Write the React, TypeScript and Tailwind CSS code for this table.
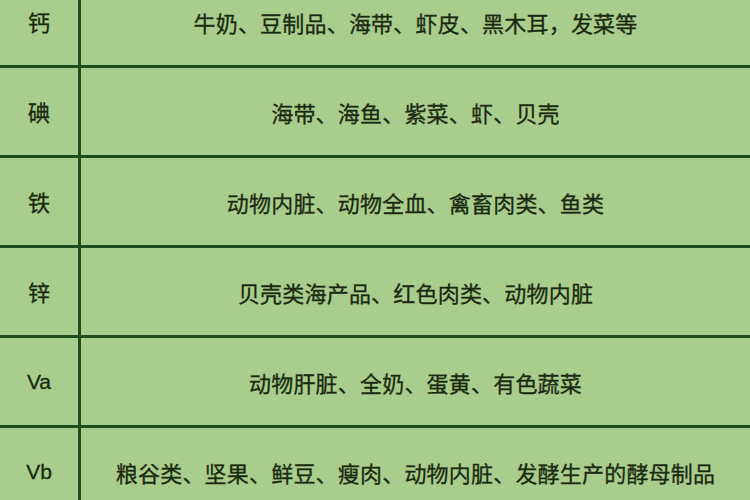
const rows = [
  { name: "钙", foods: "牛奶、豆制品、海带、虾皮、黑木耳，发菜等" },
  { name: "碘", foods: "海带、海鱼、紫菜、虾、贝壳" },
  { name: "铁", foods: "动物内脏、动物全血、禽畜肉类、鱼类" },
  { name: "锌", foods: "贝壳类海产品、红色肉类、动物内脏" },
  { name: "Va", foods: "动物肝脏、全奶、蛋黄、有色蔬菜" },
  { name: "Vb", foods: "粮谷类、坚果、鲜豆、瘦肉、动物内脏、发酵生产的酵母制品" },
];

const App = () => {
  return (
    <div
      className="h-[500px] w-[750px] overflow-hidden bg-[#a9cd8d] text-[#1a2a10]"
      style={{ fontFamily: '"Noto Sans CJK SC", "Noto Sans", sans-serif' }}
    >
      <div className="-mt-[22px] flex flex-col">
        {rows.map((row) => (
          <div
            key={row.name}
            className="flex h-[90px] shrink-0 border-b-[3px] border-[#1f4c1b]"
          >
            <div className="flex w-[81px] shrink-0 items-center justify-center border-r-[3px] border-[#1f4c1b]">
              {/^[A-Za-z]/.test(row.name) ? (
                <span className="font-['Liberation_Sans',sans-serif] text-[21px] [-webkit-text-stroke:0.3px_#1a2a10]">
                  {row.name}
                </span>
              ) : (
                <span className="text-[22px] [-webkit-text-stroke:0.3px_#1a2a10]">{row.name}</span>
              )}
            </div>
            <div className="flex flex-1 items-center justify-center text-[22px] leading-none tracking-[0.2px] [-webkit-text-stroke:0.3px_#1a2a10]">
              {row.foods}
            </div>
          </div>
        ))}
      </div>
    </div>
  );
};

export default App;
